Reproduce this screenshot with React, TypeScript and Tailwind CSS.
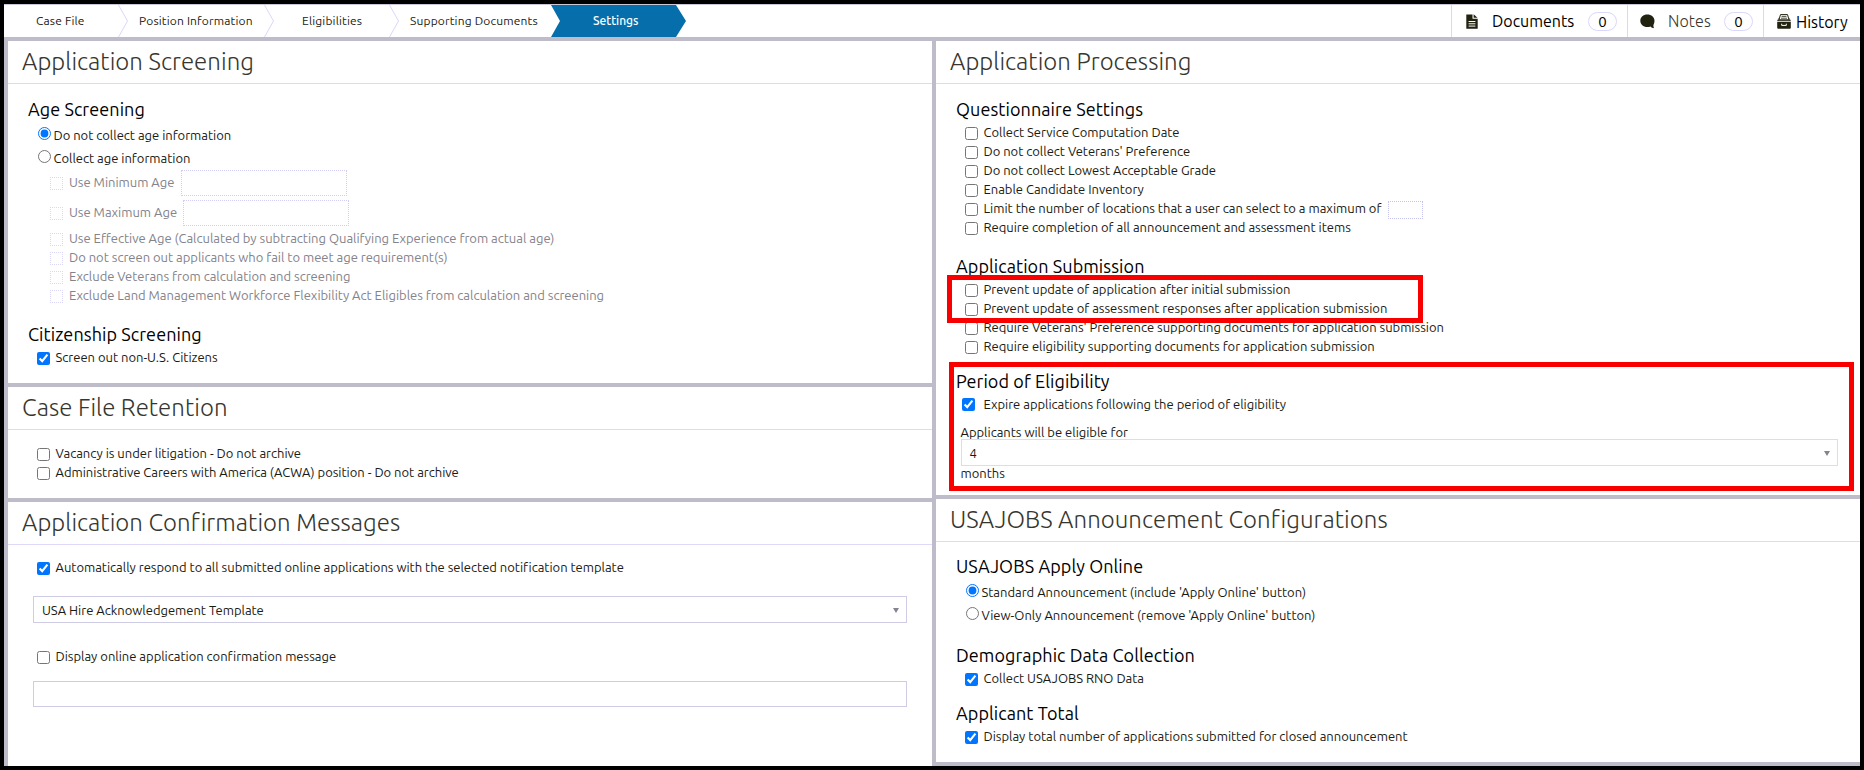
import { ReactNode } from 'react';

interface OptionProps {
  label: string;
  checked?: boolean;
  children?: ReactNode;
}

function DocumentIcon() {
  return (
    <svg width="12" height="15" viewBox="0 0 12 15" fill="#222211">
      <path d="M0.3 0.5h6.2v4.3h5.2v9.9H0.3z" />
      <path d="M7.6 0.3l3.9 3.5H7.6z" />
      <path d="M2.6 7.5h6.8M2.6 9.8h6.8M2.6 12.1h6.8" stroke="#fff" strokeWidth="1" />
    </svg>
  );
}

function NotesIcon() {
  return (
    <svg width="15" height="15" viewBox="0 0 15 15" fill="#222211">
      <path d="M7.3 0.5C3.3 0.5 0.3 3.2 0.3 6.8s3 6.3 7 6.3c1.2 0 2.3-.2 3.2-.7.9 1 2.2 1.7 3.6 1.8-.5-.8-.8-2-.6-3.4.6-1.1 1-2.5 1-4C14.5 3.2 11.3.5 7.3.5z" />
    </svg>
  );
}

function HistoryIcon() {
  return (
    <svg width="14" height="15" viewBox="0 0 14 15" fill="#222211">
      <path d="M3.5.6h7l1.5 5.2H2z" fill="none" stroke="#222211" strokeWidth="1" />
      <path d="M4.6 2.4h4.8M4 4.2h6" stroke="#222211" strokeWidth=".8" />
      <path d="M1.6 3.5L0.2 7h13.6l-1.4-3.5v2.8H1.6z" />
      <path d="M0.2 7.8h13.6v6a1 1 0 0 1-1 1H1.2a1 1 0 0 1-1-1z" />
      <path d="M4.7 9.7v1.7h4.6V9.7" fill="none" stroke="#fff" strokeWidth="1" />
    </svg>
  );
}

function Chevron() {
  return (
    <svg width="10" height="32" viewBox="0 0 10 32" className="shrink-0" fill="none" stroke="#d9d7fa">
      <path d="M0.5 0L9.5 16L0.5 32" />
    </svg>
  );
}

function Arrow() {
  return (
    <svg width="6" height="5" viewBox="0 0 6 5" className="mt-0.5 mr-[7px] ml-auto" fill="#85838f">
      <path d="M0 0h6L3 5z" />
    </svg>
  );
}

function Count() {
  return (
    <span className="flex h-[19px] w-[29px] items-center justify-center rounded-full border border-[#d9d7fa] text-[15px] leading-none">
      0
    </span>
  );
}

function PanelTitle({ children }: { children: string }) {
  return (
    <h2 className="h-[43px] border-b border-[#dcdaf8] pl-[14px] text-2xl leading-[42px] font-light tracking-[0.05px] text-[#36362e]">
      {children}
    </h2>
  );
}

function SubTitle({ children }: { children: string }) {
  return <h3 className="h-6 pl-px text-lg leading-[23px] tracking-[0.08px] text-black">{children}</h3>;
}

function CheckOption({ label, checked = false, children }: OptionProps) {
  return (
    <label className="ml-2.5 flex h-[19px] items-center">
      <input type="checkbox" defaultChecked={checked} className="size-[13px] shrink-0" />
      <span className="ml-[5.5px] pb-0.5">{label}</span>
      {children}
    </label>
  );
}

function RadioOption({ label, name, checked = false }: OptionProps & { name: string }) {
  return (
    <label className="ml-[11px] flex h-[23px] items-center">
      <input type="radio" name={name} defaultChecked={checked} className="mb-0.5 size-[13px] shrink-0" />
      <span className="ml-[2.5px] pt-0.5">{label}</span>
    </label>
  );
}

function DisabledOption({ label }: OptionProps) {
  return (
    <label className="flex h-[19px] items-center">
      <span className="size-[13px] border border-dotted border-[#d9d7fa]" />
      <span className="ml-1.5 pb-0.5">{label}</span>
    </label>
  );
}

function AgeInput({ label }: OptionProps) {
  return (
    <label className="mb-1 flex h-[26px] items-center">
      <span className="size-[13px] border border-dotted border-[#d9d7fa]" />
      <span className="ml-1.5 pb-0.5">{label}</span>
      <span className="ml-[6.2px] h-[26px] w-[166px] border border-dotted border-[#d0cef5]" />
    </label>
  );
}

export default function App() {
  return (
    <div className="relative flex h-[770px] w-[1864px] flex-col overflow-hidden border-4 border-black bg-white font-['Ubuntu','Noto_Sans',sans-serif] text-[13px] leading-[19px] tracking-[-0.015px] text-[#1a1a12]">
      <nav className="flex h-[37px] shrink-0 border-t border-b-4 border-t-[#c9c7d8] border-b-[#bebcc8]">
        <div className="flex items-center text-xs tracking-[0.16px] whitespace-nowrap">
          <span className="w-[114px] pl-8">Case File</span>
          <Chevron />
          <span className="w-[136px] pl-[11px]">Position Information</span>
          <Chevron />
          <span className="w-[115px] pl-7">Eligibilities</span>
          <Chevron />
          <span className="w-[152px] pl-[11px]">Supporting Documents</span>
          <span className="flex h-8 w-[135px] items-center bg-[#066fab] pl-[42px] font-medium tracking-normal text-white [clip-path:polygon(0_0,125px_0,100%_50%,125px_100%,0_100%,9px_50%)]">
            Settings
          </span>
        </div>
        <div className="ml-auto flex text-base text-black">
          <div className="flex w-44 items-center border-l border-[#d9d7fa] pl-[14px]">
            <DocumentIcon />
            <span className="ml-[14px] w-24">Documents</span>
            <Count />
          </div>
          <div className="flex w-[136px] items-center border-l border-[#d9d7fa] pl-3">
            <NotesIcon />
            <span className="ml-[13px] w-14 font-light tracking-[0.1px] text-[#36362e]">Notes</span>
            <Count />
          </div>
          <div className="flex w-[97px] items-center border-l border-[#d9d7fa] pl-[13px]">
            <HistoryIcon />
            <span className="mt-px ml-[5px]">History</span>
          </div>
        </div>
      </nav>

      <main className="flex min-h-0 flex-1 border-l-4 border-[#bebcc8]">
        <div className="flex w-[924px] flex-col">
          <section className="h-[346px] border-b-4 border-[#bebcc8]">
            <PanelTitle>Application Screening</PanelTitle>
            <div className="pt-[14px] pl-[19px]">
              <SubTitle>Age Screening</SubTitle>
              <div className="mt-px">
                <RadioOption name="age" label="Do not collect age information" checked />
                <RadioOption name="age" label="Collect age information" />
              </div>
              <div className="mt-px ml-[23px] text-[#84838c]">
                <AgeInput label="Use Minimum Age" />
                <AgeInput label="Use Maximum Age" />
                <DisabledOption label="Use Effective Age (Calculated by subtracting Qualifying Experience from actual age)" />
                <DisabledOption label="Do not screen out applicants who fail to meet age requirement(s)" />
                <DisabledOption label="Exclude Veterans from calculation and screening" />
                <DisabledOption label="Exclude Land Management Workforce Flexibility Act Eligibles from calculation and screening" />
              </div>
              <div className="mt-[17px] space-y-0.5">
                <SubTitle>Citizenship Screening</SubTitle>
                <CheckOption label="Screen out non-U.S. Citizens" checked />
              </div>
            </div>
          </section>

          <section className="h-[115px] border-b-4 border-[#bebcc8]">
            <PanelTitle>Case File Retention</PanelTitle>
            <div className="pt-[15px] pl-[19px]">
              <CheckOption label="Vacancy is under litigation - Do not archive" />
              <CheckOption label="Administrative Careers with America (ACWA) position - Do not archive" />
            </div>
          </section>

          <section className="flex-1">
            <PanelTitle>Application Confirmation Messages</PanelTitle>
            <div className="pt-[14px] pl-[19px]">
              <CheckOption
                label="Automatically respond to all submitted online applications with the selected notification template"
                checked
              />
              <div className="mt-[18px] ml-1.5 flex h-[27px] w-[874px] items-center border border-[#cfcde6] pl-2">
                <span className="pt-px">USA Hire Acknowledgement Template</span>
                <Arrow />
              </div>
              <div className="mt-[25px]">
                <CheckOption label="Display online application confirmation message" />
              </div>
              <div className="mt-[14px] ml-1.5 h-[26px] w-[874px] border border-[#cfcde6]" />
            </div>
          </section>
        </div>

        <div className="flex w-[928px] flex-col border-l-4 border-[#bebcc8]">
          <section className="h-[458px] border-b-4 border-[#bebcc8]">
            <PanelTitle>Application Processing</PanelTitle>
            <div className="pt-[14px] pl-[19px]">
              <SubTitle>Questionnaire Settings</SubTitle>
              <div className="mt-0.5">
                <CheckOption label="Collect Service Computation Date" />
                <CheckOption label="Do not collect Veterans' Preference" />
                <CheckOption label="Do not collect Lowest Acceptable Grade" />
                <CheckOption label="Enable Candidate Inventory" />
                <CheckOption label="Limit the number of locations that a user can select to a maximum of">
                  <span className="ml-[7px] h-[18px] w-[35px] border border-dotted border-[#c4c2ee]" />
                </CheckOption>
                <CheckOption label="Require completion of all announcement and assessment items" />
              </div>

              <div className="mt-[17px]">
                <SubTitle>Application Submission</SubTitle>
                <div className="mt-0.5">
                  <CheckOption label="Prevent update of application after initial submission" />
                  <CheckOption label="Prevent update of assessment responses after application submission" />
                  <CheckOption label="Require Veterans' Preference supporting documents for application submission" />
                  <CheckOption label="Require eligibility supporting documents for application submission" />
                </div>
              </div>

              <div className="mt-[13px]">
                <SubTitle>Period of Eligibility</SubTitle>
                <label className="mt-px ml-[7px] flex h-[19px] items-center">
                  <input type="checkbox" defaultChecked className="size-[13px]" />
                  <span className="ml-[8.5px]">Expire applications following the period of eligibility</span>
                </label>
                <div className="mt-2.5 ml-[5.5px]">
                  <p className="h-[15px] leading-4">Applicants will be eligible for</p>
                  <div className="flex h-[27px] w-[877px] items-center border border-[#dcdaf8] pl-2">
                    <span className="pt-px">4</span>
                    <Arrow />
                  </div>
                  <p className="leading-[15px]">months</p>
                </div>
              </div>
            </div>
          </section>

          <section className="flex-1 border-b-4 border-[#bebcc8]">
            <PanelTitle>USAJOBS Announcement Configurations</PanelTitle>
            <div className="pt-[13px] pl-[19px]">
              <SubTitle>USAJOBS Apply Online</SubTitle>
              <div className="mt-px">
                <RadioOption name="announcement" label="Standard Announcement (include 'Apply Online' button)" checked />
                <RadioOption name="announcement" label="View-Only Announcement (remove 'Apply Online' button)" />
              </div>
              <div className="mt-[18px] space-y-0.5">
                <SubTitle>Demographic Data Collection</SubTitle>
                <CheckOption label="Collect USAJOBS RNO Data" checked />
              </div>
              <div className="mt-[13px] space-y-0.5">
                <SubTitle>Applicant Total</SubTitle>
                <CheckOption label="Display total number of applications submitted for closed announcement" checked />
              </div>
            </div>
          </section>
        </div>
      </main>

      {/* highlight boxes drawn over the settings */}
      <div className="pointer-events-none absolute top-[271px] left-[943px] h-12 w-[476px] border-5 border-[#f80000]" />
      <div className="pointer-events-none absolute top-[358px] left-[945px] h-[129px] w-[905px] border-5 border-[#f80000]" />
    </div>
  );
}
